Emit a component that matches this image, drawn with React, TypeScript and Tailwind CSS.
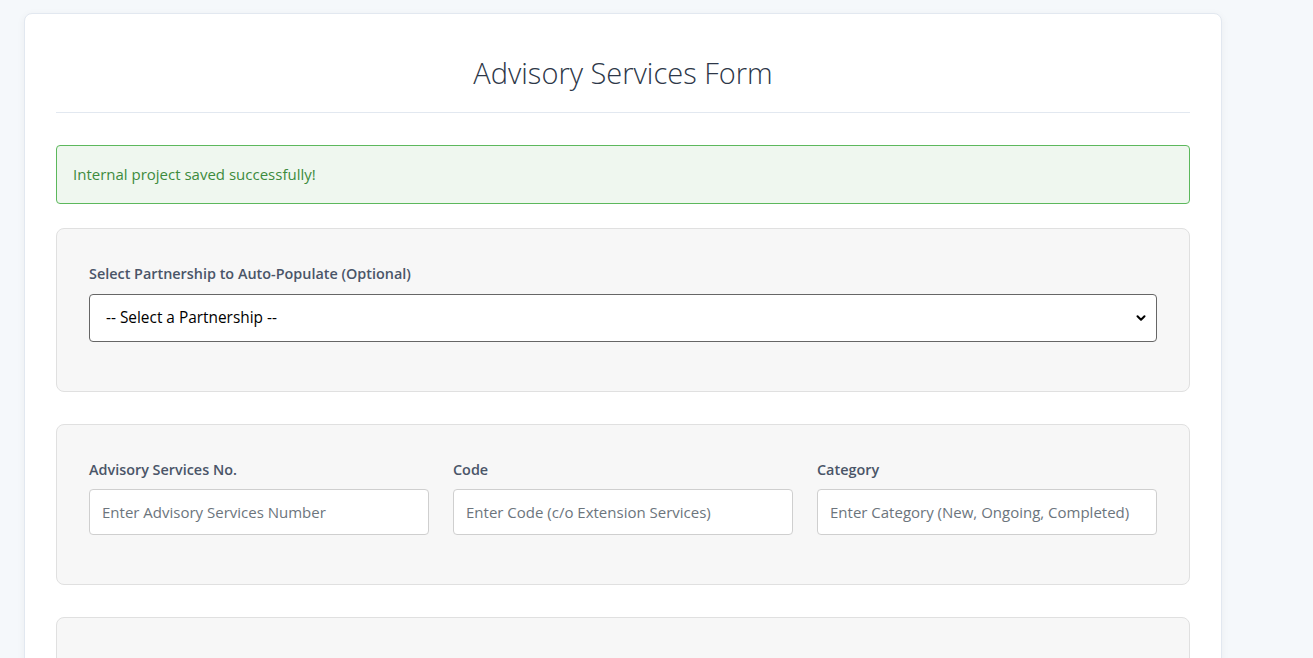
import { ChevronDown } from 'lucide-react';

const fieldBase =
  'block w-full h-[46px] rounded-[4px] border border-[#cfcfcf] bg-white px-[12px] text-[15px] text-[#333] placeholder:text-[#6c757d] focus:outline-none';

const labelBase = 'block text-[14.4px] leading-[21px] font-semibold text-[#4a5568]';

export default function App() {
  return (
    <div className="min-h-[658px] bg-[#f5f8fb] pt-[13px] pl-[24px] font-['Open_Sans',sans-serif]">
      <div className="w-[1198px] min-h-[660px] rounded-t-[8px] border border-[#e2e8f0] bg-white px-[31px] pt-[31px] shadow-[0_2px_8px_rgba(0,0,0,0.05)]">
        {/* Encabezado */}
        <div className="border-b border-[#e2e8f0] pt-[8px] pb-[19px]">
          <h1 className="text-center text-[29px] leading-[40px] font-light text-[#2d3748]">
            Advisory Services Form
          </h1>
        </div>

        {/* Alerta */}
        <div className="mt-[32px] rounded-[4px] border border-[#5cb85c] bg-[#eff7ef] px-[16px] py-[18px] text-[15px] leading-[21px] text-[#3d8b3d]">
          Internal project saved successfully!
        </div>

        {/* Sección de partnership */}
        <div className="mt-[24px] rounded-[8px] border border-[#e0e0e0] bg-[#f7f7f7] px-[32px] pt-[34px] pb-[49px]">
          <label htmlFor="partnership" className={`${labelBase} mb-[10px]`}>
            Select Partnership to Auto-Populate (Optional)
          </label>
          <div className="relative">
            <select
              id="partnership"
              defaultValue=""
              className="block w-full h-[48px] appearance-none rounded-[4px] border border-[#666] bg-white pl-[16px] pr-[40px] text-[15.4px] text-black focus:outline-none"
            >
              <option value="">-- Select a Partnership --</option>
            </select>
            <ChevronDown
              size={14}
              strokeWidth={3.5}
              className="pointer-events-none absolute right-[9px] top-[17px] text-black"
            />
          </div>
        </div>

        {/* Datos generales */}
        <div className="mt-[32px] rounded-[8px] border border-[#e0e0e0] bg-[#f7f7f7] px-[32px] pt-[34px] pb-[49px]">
          <div className="grid grid-cols-3 gap-[24px]">
            <div>
              <label htmlFor="asNo" className={`${labelBase} mb-[9px]`}>
                Advisory Services No.
              </label>
              <input id="asNo" type="text" placeholder="Enter Advisory Services Number" className={fieldBase} />
            </div>
            <div>
              <label htmlFor="code" className={`${labelBase} mb-[9px]`}>
                Code
              </label>
              <input id="code" type="text" placeholder="Enter Code (c/o Extension Services)" className={fieldBase} />
            </div>
            <div>
              <label htmlFor="category" className={`${labelBase} mb-[9px]`}>
                Category
              </label>
              <input
                id="category"
                type="text"
                placeholder="Enter Category (New, Ongoing, Completed)"
                className={fieldBase}
              />
            </div>
          </div>
        </div>

        <div className="mt-[32px] h-[120px] rounded-[8px] border border-[#e0e0e0] bg-[#f7f7f7]" />
      </div>
    </div>
  );
}
